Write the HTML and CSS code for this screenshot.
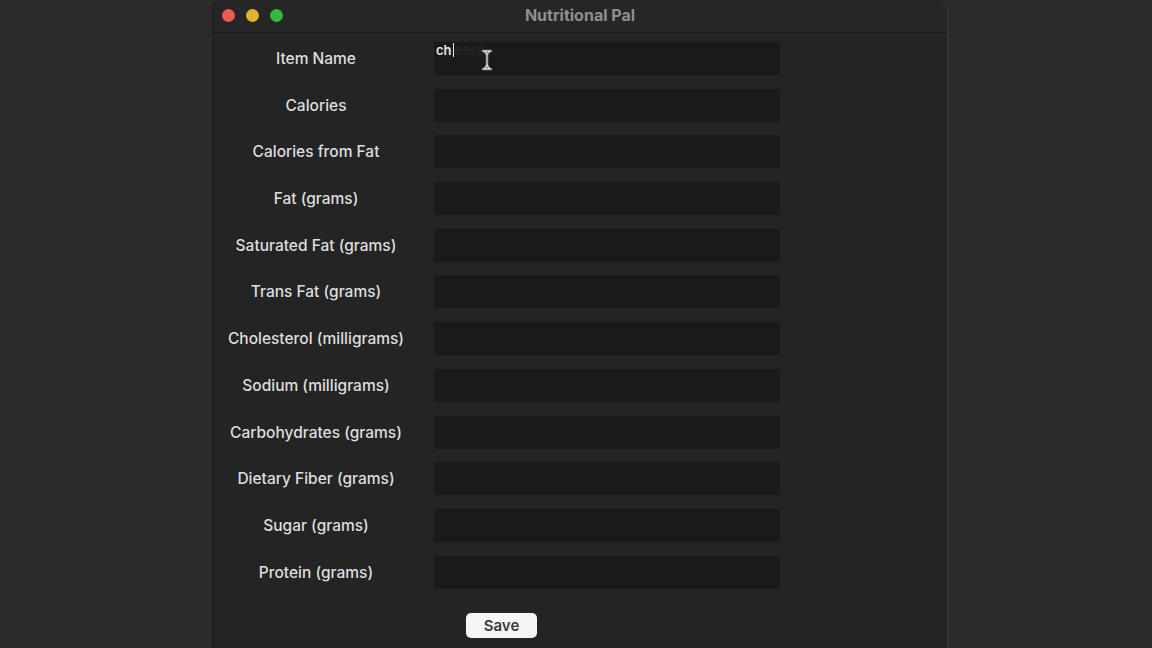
FILE: index.html
```html
<!DOCTYPE html>
<html>
<head>
<meta charset="utf-8">
<link rel="stylesheet" href="styles.css">
</head>
<body>
<div class="window">
  <div class="titlebar">
    <div class="lights">
      <span class="light red"></span>
      <span class="light yellow"></span>
      <span class="light green"></span>
    </div>
    <div class="title">Nutritional Pal</div>
  </div>
  <div class="form">
    <div class="label">Item Name</div>
    <div class="input active"><span class="typed">ch</span><span class="caret"></span><span class="ghost">eese</span>
      <svg class="ibeam" width="12" height="22" viewBox="0 0 12 22"><g fill="none" stroke-linecap="round"><path d="M2 2 H10 M2 20 H10 M3 2 Q6 4 6 7 V15 Q6 18 3 20 M9 2 Q6 4 6 7 V15 Q6 18 9 20" stroke="#555" stroke-width="3"/><path d="M2 2 H10 M2 20 H10 M3 2 Q6 4 6 7 V15 Q6 18 3 20 M9 2 Q6 4 6 7 V15 Q6 18 9 20" stroke="#d4d4d4" stroke-width="1.3"/></g></svg>
    </div>
    <div class="label">Calories</div><div class="input"></div>
    <div class="label">Calories from Fat</div><div class="input"></div>
    <div class="label">Fat (grams)</div><div class="input"></div>
    <div class="label">Saturated Fat (grams)</div><div class="input"></div>
    <div class="label">Trans Fat (grams)</div><div class="input"></div>
    <div class="label">Cholesterol (milligrams)</div><div class="input"></div>
    <div class="label">Sodium (milligrams)</div><div class="input"></div>
    <div class="label">Carbohydrates (grams)</div><div class="input"></div>
    <div class="label">Dietary Fiber (grams)</div><div class="input"></div>
    <div class="label">Sugar (grams)</div><div class="input"></div>
    <div class="label">Protein (grams)</div><div class="input"></div>
    <div class="actions"><button class="save">Save</button></div>
  </div>
</div>
</body>
</html>
```
FILE: styles.css
```css
html, body {
  margin: 0;
  padding: 0;
  height: 100%;
  overflow: hidden;
}
body {
  background: #2b2b2b;
  font-family: "Inter", "Liberation Sans", sans-serif;
}
.window {
  margin-left: 212px;
  width: 736px;
  height: 660px;
  background: #242424;
  border-right: 1px solid #3a3a3a;
  border-left: 1px solid #1e1e1e;
  box-sizing: border-box;
  border-radius: 10px 10px 0 0;
}
.titlebar {
  height: 33px;
  display: flex;
  align-items: center;
  position: relative;
  background: #262626;
  border-bottom: 1px solid #1c1c1c;
  box-sizing: border-box;
  border-radius: 10px 10px 0 0;
}
.lights {
  display: flex;
  gap: 11px;
  padding-left: 9px;
  padding-bottom: 1px;
}
.light {
  width: 13px;
  height: 13px;
  border-radius: 50%;
  display: block;
}
.red { background: #ec5a52; }
.yellow { background: #e3b22f; }
.green { background: #33b941; }
.title {
  position: absolute;
  left: 0;
  right: 0;
  top: 0;
  line-height: 31px;
  text-align: center;
  font-weight: 700;
  font-size: 16px;
  color: #8f8f8f;
}
.form {
  display: grid;
  grid-template-columns: 206px 346px;
  grid-auto-rows: 33px;
  column-gap: 15px;
  row-gap: 13.7px;
  padding-top: 9px;
}
.label {
  display: flex;
  align-items: center;
  justify-content: center;
  font-size: 15.5px;
  font-weight: 500;
  color: #dedede;
}
.input {
  background: #1a1a1a;
  position: relative;
}
.input.active {
  font-size: 13px;
  font-weight: 600;
  color: #e6e6e6;
  padding: 1px 0 0 2px;
  display: flex;
  align-items: flex-start;
  line-height: 15px;
}
.typed { display: inline-block; }
.caret {
  display: inline-block;
  width: 1px;
  height: 14px;
  background: #e6e6e6;
  margin-left: 1px;
}
.ghost {
  color: #262626;
  margin-left: 1px;
}
.ibeam {
  position: absolute;
  left: 47px;
  top: 7px;
}
.actions {
  grid-column: 2;
  padding-left: 32px;
  padding-top: 11px;
}
.save {
  width: 71px;
  height: 25px;
  background: #f5f5f5;
  border: none;
  border-radius: 5px;
  font-family: "Inter", "Liberation Sans", sans-serif;
  font-size: 15px;
  font-weight: 600;
  color: #3a3a3a;
  padding: 0;
}
```
